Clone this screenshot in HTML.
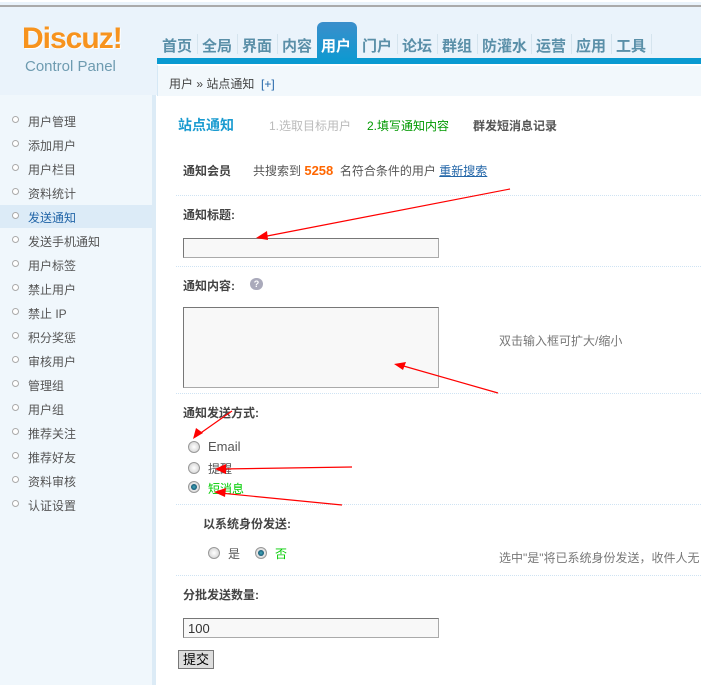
<!DOCTYPE html>
<html><head><meta charset="utf-8"><style>
*{margin:0;padding:0;box-sizing:border-box}
body{width:701px;height:685px;overflow:hidden;background:#fff;font:12px "Liberation Sans","Noto Sans CJK SC",sans-serif;color:#555;position:relative}
.a{position:absolute;white-space:nowrap}
#hd{position:absolute;left:0;top:0;width:701px;height:95px;background:#eaf3fb;border-top:2px solid #fff}
#hd:before{content:"";position:absolute;left:0;top:3px;width:701px;height:2px;background:#aaa}
.nav{position:absolute;top:33px;font-size:15px;color:#5a8fa8;font-weight:bold}
.sep{position:absolute;top:32px;width:1px;height:20px;background:#d5e4ee}
.side{position:absolute;left:0;top:95px;width:156px;height:590px;background:#f0f7fc;border-right:4px solid #dcebf6}
.si{position:absolute;left:28px;font-size:12px;color:#555}
.dot{position:absolute;left:12px;width:7px;height:7px;border:1px solid #aaa;border-radius:50%;background:#fff}
.ln{position:absolute;left:176px;width:525px;border-top:1px dotted #cfe3f3}
.lb{position:absolute;font-weight:bold;color:#444}
.inp{position:absolute;left:183px;width:256px;border:1px solid #aaa;border-top-color:#777;border-left-color:#777;background:#f8f8f8}
.rd{position:absolute;width:12px;height:12px;border-radius:50%;border:1px solid #999;background:radial-gradient(#fff,#ccc)}
.rd.on:after{content:"";position:absolute;left:2px;top:2px;width:6px;height:6px;border-radius:50%;background:radial-gradient(#4ab,#035)}
</style></head><body>
<div id="hd">
<div class="a" style="left:22px;top:20px;font-size:30px;font-weight:bold;color:#f7931e;letter-spacing:-1px;text-shadow:1px 1px 0 #fff">Discuz!</div>
<div class="a" style="left:25px;top:56px;font-size:15px;color:#6e9bb0">Control Panel</div>
<div class="a" style="left:157px;top:56px;width:544px;height:6px;background:#0a9ad1"></div>
<div class="a" style="left:157px;top:62px;width:544px;height:32px;background:#f2f8fc;border-left:1px solid #d6e8f5;border-top:2px solid #fff"></div>
<div class="a" style="left:317px;top:20px;width:40px;height:42px;background:linear-gradient(#3b8ecb,#0a9ad1);border-radius:6px 6px 0 0"></div>
<div class="nav a" style="left:162px">首页</div><div class="sep" style="left:197px"></div>
<div class="nav a" style="left:202px">全局</div><div class="sep" style="left:237px"></div>
<div class="nav a" style="left:242px">界面</div><div class="sep" style="left:277px"></div>
<div class="nav a" style="left:282px">内容</div>
<div class="nav a" style="left:321px;color:#fff">用户</div>
<div class="nav a" style="left:362px">门户</div><div class="sep" style="left:397px"></div>
<div class="nav a" style="left:402px">论坛</div><div class="sep" style="left:437px"></div>
<div class="nav a" style="left:442px">群组</div><div class="sep" style="left:477px"></div>
<div class="nav a" style="left:482px">防灌水</div><div class="sep" style="left:531px"></div>
<div class="nav a" style="left:536px">运营</div><div class="sep" style="left:571px"></div>
<div class="nav a" style="left:576px">应用</div><div class="sep" style="left:611px"></div>
<div class="nav a" style="left:616px">工具</div><div class="sep" style="left:651px"></div>
<div class="a" style="left:169px;top:73px;color:#444">用户 » 站点通知 &nbsp;<span style="color:#2366a8">[+]</span></div>
</div>
<div class="side">
<div class="a" style="left:0;top:110px;width:152px;height:23px;background:#dcebf7"></div>
</div>
<div id="sb"></div>
<script>
var n=["用户管理","添加用户","用户栏目","资料统计","发送通知","发送手机通知","用户标签","禁止用户","禁止 IP","积分奖惩","审核用户","管理组","用户组","推荐关注","推荐好友","资料审核","认证设置"],h="";
n.forEach(function(t,i){var y=113+i*24;h+='<div class="dot" style="top:'+(y+3)+'px"></div><div class="si a" style="top:'+y+'px;'+(i==4?'color:#2366a8':'')+'">'+t+'</div>'});
document.getElementById('sb').innerHTML=h;
</script>
<div class="a" style="left:178px;top:115px;font-size:14px;font-weight:bold;color:#1a9bd0">站点通知</div>
<div class="a" style="left:269px;top:117px;color:#bbb">1.选取目标用户</div>
<div class="a" style="left:367px;top:117px;color:#090">2.填写通知内容</div>
<div class="a" style="left:473px;top:117px;color:#555;font-weight:bold">群发短消息记录</div>
<div class="lb a" style="left:183px;top:162px">通知会员</div>
<div class="a" style="left:253px;top:162px">共搜索到 <b style="color:#f60;font-size:13px">5258</b> &nbsp;名符合条件的用户 <u style="color:#2366a8">重新搜索</u></div>
<div class="ln" style="top:195px"></div>
<div class="lb a" style="left:183px;top:206px">通知标题:</div>
<div class="inp" style="top:238px;height:20px"></div>
<div class="ln" style="top:266px"></div>
<div class="lb a" style="left:183px;top:277px">通知内容:</div>
<div class="a" style="left:250px;top:278px;width:13px;height:12px;border-radius:6px;background:#aab;color:#fff;font-size:9px;text-align:center;line-height:12px;font-weight:bold">?</div>
<div class="inp" style="top:307px;height:81px"></div>
<div class="a" style="left:499px;top:332px;color:#777">双击输入框可扩大/缩小</div>
<div class="ln" style="top:393px"></div>
<div class="lb a" style="left:183px;top:404px">通知发送方式:</div>
<div class="rd" style="left:188px;top:441px"></div><div class="a" style="left:208px;top:439px;font-size:13px">Email</div>
<div class="rd" style="left:188px;top:462px"></div><div class="a" style="left:208px;top:460px">提醒</div>
<div class="rd on" style="left:188px;top:481px"></div><div class="a" style="left:208px;top:480px;color:#0c0">短消息</div>
<div class="ln" style="top:504px"></div>
<div class="lb a" style="left:203px;top:515px">以系统身份发送:</div>
<div class="rd" style="left:208px;top:547px"></div><div class="a" style="left:228px;top:545px">是</div>
<div class="rd on" style="left:255px;top:547px"></div><div class="a" style="left:275px;top:545px;color:#0c0">否</div>
<div class="a" style="left:499px;top:549px;color:#777">选中"是"将已系统身份发送，收件人无</div>
<div class="ln" style="top:575px"></div>
<div class="lb a" style="left:183px;top:586px">分批发送数量:</div>
<div class="inp" style="top:618px;height:20px;padding:2px 4px;font-size:13px;color:#333">100</div>
<div class="a" style="left:178px;top:650px;width:36px;height:19px;border:1px solid #777;background:#ddd;color:#000;text-align:center;line-height:17px;font-size:13px">提交</div>
<svg class="a" style="left:0;top:0" width="701" height="685">
<g stroke="red" stroke-width="1.2" fill="none">
<line x1="510" y1="189" x2="262" y2="237"/><line x1="498" y1="393" x2="400" y2="365"/>
<line x1="232" y1="411" x2="195" y2="437"/><line x1="352" y1="467" x2="222" y2="469"/>
<line x1="342" y1="505" x2="220" y2="493"/></g>
<g fill="red"><polygon points="256,238 267,231 268,240"/><polygon points="394,364 406,362 403,370"/>
<polygon points="193,439 196,428 203,433"/><polygon points="215,469 226,464 226,474"/><polygon points="214,492 226,488 225,497"/></g>
</svg>
</body></html>
